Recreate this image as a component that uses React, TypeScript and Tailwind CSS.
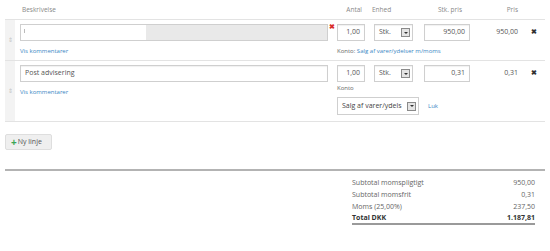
import React from "react";

function Gutter() {
  return (
    <div className="w-[10px] shrink-0 bg-[#f3f3f3] flex items-center justify-center">
      <span className="text-[6px] leading-none text-[#c4c4c4]">⇕</span>
    </div>
  );
}

function DropBtn() {
  return (
    <div className="w-[9px] h-[9px] border border-[#8a8a8a] bg-[#e4e4e4] flex items-center justify-center">
      <div className="w-0 h-0 border-l-[2px] border-r-[2px] border-t-[2px] border-l-transparent border-r-transparent border-t-[#333]" />
    </div>
  );
}

function Box({ children, className = "" }: { children?: React.ReactNode; className?: string }) {
  return (
    <div
      className={
        "h-[17px] border border-[#cfcfcf] bg-white shadow-[inset_0_1px_1px_rgba(0,0,0,0.06)] flex items-center text-[7px] text-[#555] " +
        className
      }
    >
      {children}
    </div>
  );
}

function InputsRow({ first, pris, unit }: { first: boolean; pris: string; unit: string }) {
  return (
    <div className="flex items-start">
      <div className="ml-[5px] w-[308px]">
        {first ? (
          <div className="h-[17px] border border-[#cfcfcf] flex">
            <div className="w-[125px] bg-white relative">
              <div className="absolute left-[3px] top-[4px] w-[1px] h-[4px] bg-[#bbb]" />
            </div>
            <div className="flex-1 bg-[#e9e9e9]" />
          </div>
        ) : (
          <Box className="pl-[4px] text-[#444] text-[7.5px]">Post advisering</Box>
        )}
      </div>
      <div className="w-[9px] h-[17px] relative">
        {first && (
          <span className="absolute left-[1px] top-[-1px] text-[7px] font-bold leading-none text-[#d9302c]">✖</span>
        )}
      </div>
      <Box className="w-[28px] justify-end pr-[4px]">1,00</Box>
      <div className="w-[9px]" />
      <Box className="w-[39px] justify-between pl-[4px] pr-[2px]">
        <span>Stk.</span>
        <DropBtn />
      </Box>
      <div className="w-[11px]" />
      <Box className="w-[46px] justify-end pr-[4px]">{unit}</Box>
      <div className="w-[48px] h-[17px] flex items-center justify-end text-[7px] text-[#555]">{pris}</div>
      <div className="w-[27px] h-[17px] flex items-center pl-[13px] text-[7px] font-bold text-[#333]">✖</div>
    </div>
  );
}

export default function App() {
  return (
    <div className="w-[550px] h-[251px] bg-white font-['Open_Sans',sans-serif] text-[#555] pl-[5px] overflow-hidden">
      {/* header */}
      <div className="h-[19px] w-[540px] flex items-center text-[6.5px] text-[#888]">
        <div className="w-[10px]" />
        <div className="w-[322px] pl-[7px]">Beskrivelse</div>
        <div className="w-[28px] text-right pr-[3px]">Antal</div>
        <div className="w-[9px]" />
        <div className="w-[39px] -ml-[2px]">Enhed</div>
        <div className="w-[13px]" />
        <div className="w-[46px] text-right pr-[8px]">Stk. pris</div>
        <div className="w-[48px] text-right">Pris</div>
      </div>

      <div className="w-[540px] border-t border-[#e3e3e3]">
        {/* row 1 */}
        <div className="flex h-[41px] border-b border-[#e3e3e3]">
          <Gutter />
          <div className="flex-1 pt-[4px]">
            <InputsRow first pris="950,00" unit="950,00" />
            <div className="flex mt-[6px] text-[6px] leading-[9px]">
              <div className="w-[322px] pl-[5px] text-[#3b87c4]">Vis kommentarer</div>
              <div className="text-[#666]">
                Konto: <span className="text-[#3b87c4]">Salg af varer/ydelser m/moms</span>
              </div>
            </div>
          </div>
        </div>

        {/* row 2 */}
        <div className="flex h-[61px] border-b border-[#e3e3e3]">
          <Gutter />
          <div className="flex-1 pt-[4px]">
            <InputsRow first={false} pris="0,31" unit="0,31" />
            <div className="flex">
              <div className="w-[322px] pl-[5px] mt-[6px] text-[6px] leading-[9px] text-[#3b87c4]">Vis kommentarer</div>
              <div className="flex flex-col">
                <div className="mt-[2px] text-[6px] leading-[9px] text-[#666]">Konto</div>
                <div className="flex items-center mt-[4px]">
                  <div className="w-[82px] h-[18px] border border-[#cfcfcf] bg-white flex items-center justify-between pl-[4px] pr-[2px] text-[7px] text-[#444]">
                    <span className="whitespace-nowrap">Salg af varer/ydels</span>
                    <DropBtn />
                  </div>
                  <span className="ml-[9px] text-[6px] text-[#3b87c4]">Luk</span>
                </div>
              </div>
            </div>
          </div>
        </div>
      </div>

      {/* Ny linje */}
      <div className="mt-[12px] w-[47px] h-[16px] bg-[#efefef] border border-[#dedede] rounded-[2px] flex items-center pl-[5px] text-[7px] text-[#555]">
        <span className="text-[#3aa655] font-bold text-[10px] leading-none mr-[1px]">+</span>
        <span>Ny linje</span>
      </div>

      <div className="mt-[19px] w-[540px] h-[2px] bg-[#b3b3b3]" />

      {/* totals */}
      <div className="ml-[347px] w-[183px] mt-[6px] text-[7px] text-[#666]">
        <div className="flex justify-between h-[12px] items-center">
          <span>Subtotal momspligtigt</span>
          <span>950,00</span>
        </div>
        <div className="flex justify-between h-[12px] items-center">
          <span>Subtotal momsfrit</span>
          <span>0,31</span>
        </div>
        <div className="flex justify-between h-[12px] items-center">
          <span>Moms (25,00%)</span>
          <span>237,50</span>
        </div>
        <div className="flex justify-between h-[12px] items-center font-bold text-[#333] border-b-2 border-[#9a9a9a]">
          <span>Total DKK</span>
          <span>1.187,81</span>
        </div>
      </div>
    </div>
  );
}
